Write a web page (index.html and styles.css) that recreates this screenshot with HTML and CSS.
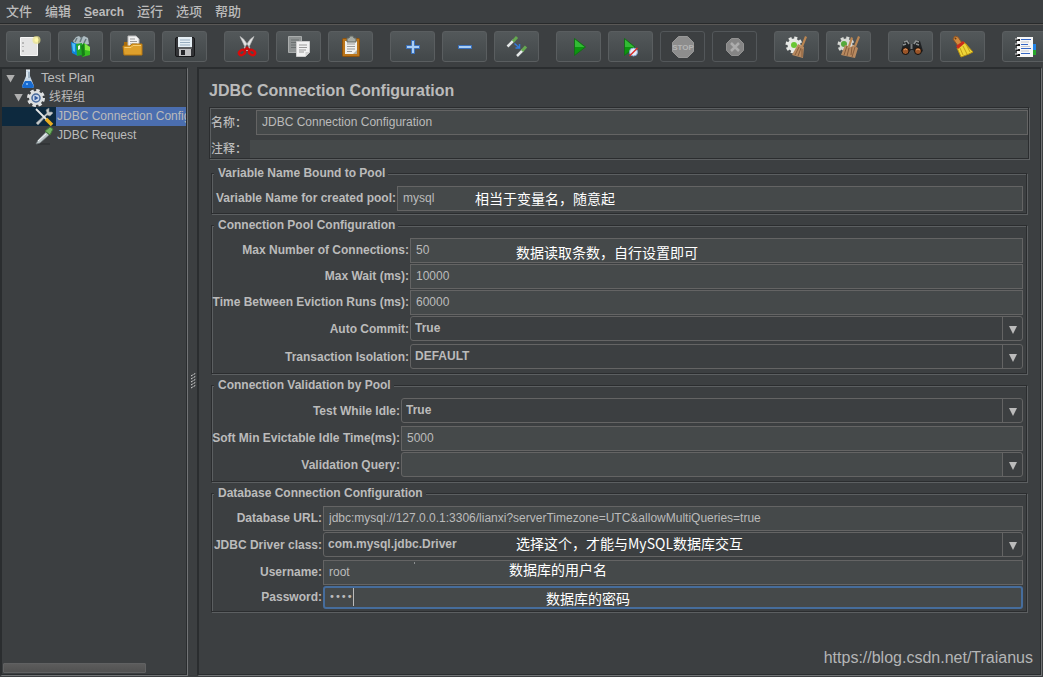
FILE: index.html
```html
<!DOCTYPE html>
<html lang="zh-CN">
<head>
<meta charset="utf-8">
<title>JDBC Connection Configuration</title>
<link rel="stylesheet" href="styles.css">
</head>
<body>
<div class="app">
  <nav class="menubar">
    <button class="menu">文件</button>
    <button class="menu">编辑</button>
    <button class="menu latin"><u>S</u>earch</button>
    <button class="menu">运行</button>
    <button class="menu">选项</button>
    <button class="menu">帮助</button>
  </nav>

  <div class="toolbar">
    <div class="tools">
      <button class="tool" aria-label="New"><svg class="icon" viewBox="0 0 24 24"><path d="M3.500 2.500h17v18h-17z" fill="#e4e4e4" stroke="#f6f6f6"/><path d="M6 7v2M6 11v1M6 15v2" stroke="#888"/><circle cx="19.500" cy="5" r="4" fill="#eee58a" opacity=".7"/><circle cx="19.500" cy="5" r="2" fill="#fff9a8"/></svg></button>
      <button class="tool" aria-label="Templates"><svg class="icon" viewBox="0 0 24 24"><path d="M4 6 7 2l3-1 2 2 3-2 4 2 1 6-12 3z" fill="#aebcc2"/><path d="M6 7 8 3m3 4 2-5m2 6 2-4" stroke="#66777d" stroke-width="1.500"/><path d="m2 7 7 2v12l-6-3z" fill="#0d83dc"/><path d="m3 8 3 1v8l-2-1z" fill="#55bff7"/><path d="m7 9 6-1v12l-5 1z" fill="#20a72c"/><path d="m9 11 2-1v4l-2 1z" fill="#e8f7e8"/><path d="m12 11 3-3 6 4v8l-8 2z" fill="#38bd20"/><path d="m12 11 3-3 1 12-3 2z" fill="#167e17"/><path d="m16 9 5 3v4l-5-1z" fill="#83e944"/></svg></button>
      <button class="tool" aria-label="Open"><svg class="icon" viewBox="0 0 24 24"><path d="M3 7h5l2 2h11v10H3z" fill="#a86c0b"/><path d="M7 1h8l3 3v9H7z" fill="#f2f2f2" stroke="#bbb"/><path d="M9 4h5M9 6.500h7M9 9h7" stroke="#999"/><path d="M2 11h7l2-2h10v11H3z" fill="#dea02c" stroke="#b87910"/><path d="M3.500 12.500H10l2-2h8" stroke="#f7cd72" fill="none"/></svg></button>
      <button class="tool" aria-label="Save"><svg class="icon" viewBox="0 0 24 24"><rect x="2.500" y="2.500" width="19" height="19" rx="1.500" fill="#333437" stroke="#161719"/><path d="M5 2h14v10H5z" fill="#e6eff5"/><path d="M7 5h10M7 7.500h10M7 10h10" stroke="#98adbf"/><path d="M6 14h12v7H6z" fill="#bfc0c1"/><rect x="8" y="15" width="4" height="5" fill="#252629"/><path d="M5 13h14" stroke="#85888b"/></svg></button>
    </div>
    <div class="tools">
      <button class="tool" aria-label="Cut"><svg class="icon" viewBox="0 0 24 24"><path d="M5 1.500 8.500 4l6.500 9-3 3zM19 1.500 15.500 4 9 13l3 3z" fill="#e4e4e4" stroke="#b9baba" stroke-width=".7"/><ellipse cx="7" cy="17.500" rx="3.200" ry="2.300" transform="rotate(-30 7 17.500)" fill="none" stroke="#d70b0b" stroke-width="2.500"/><ellipse cx="17" cy="17.500" rx="3.200" ry="2.300" transform="rotate(30 17 17.500)" fill="none" stroke="#d70b0b" stroke-width="2.500"/><path d="m9 15.500 3-2.500 3 2.500" fill="none" stroke="#c60c0c" stroke-width="2.500"/></svg></button>
      <button class="tool" aria-label="Copy"><svg class="icon" viewBox="0 0 24 24"><path d="M1.500 1.500h13v16h-13z" fill="#8e9292" stroke="#a9acac"/><path d="M4 5h8M4 7.500h8M4 10h8M4 12.500h6" stroke="#6b7070"/><path d="M9.500 6.500h13v11l-4 4h-9z" fill="#f1f1f1" stroke="#ccc"/><path d="M12 10h8M12 12.500h8M12 15h7M12 17h5" stroke="#999"/><path d="m18.500 21 4-4h-4z" fill="#cfcfcf"/></svg></button>
      <button class="tool" aria-label="Paste"><svg class="icon" viewBox="0 0 24 24"><rect x="3.500" y="3.500" width="17" height="18" rx="1" fill="#ba751a" stroke="#8e520d"/><path d="M6 6h12v13H6z" fill="#f0f0ed"/><path d="M8 3h2l1-2h3l1 2h2v4H8z" fill="#a5aaa4" stroke="#606660"/><path d="M8 9h8M8 11.500h8M8 14h8M8 16.500h5" stroke="#999"/><path d="m14 19 4-4v4z" fill="#b2b2aa"/></svg></button>
    </div>
    <div class="tools">
      <button class="tool" aria-label="Expand"><svg class="icon" viewBox="0 0 24 24"><path d="M10.500 5.500h3v5h5v3h-5v5h-3v-5h-5v-3h5z" fill="#a9cef5" stroke="#3970bd"/></svg></button>
      <button class="tool" aria-label="Collapse"><svg class="icon" viewBox="0 0 24 24"><path d="M5.500 10.500h13v3h-13z" fill="#a9cef5" stroke="#3970bd"/></svg></button>
      <button class="tool" aria-label="Toggle"><svg class="icon" viewBox="0 0 24 24"><path d="m2.500 11.500 6-6" stroke="#e5e8e8" stroke-width="2.500"/><path d="m8 6.500 4-4.500" stroke="#65a850" stroke-width="3"/><path d="m12 21 6-6" stroke="#e5e8e8" stroke-width="2.500"/><path d="m17 16 4-4.500" stroke="#65a850" stroke-width="3"/><path d="m9.500 8.500 4.500 4m.5-3.500v4h-4" fill="none" stroke="#347ad9" stroke-width="1.500"/></svg></button>
    </div>
    <div class="tools">
      <button class="tool" aria-label="Start"><svg class="icon" viewBox="0 0 24 24"><path d="M7.500 3.500 18.500 12 7.500 20.500z" fill="#0c960f" stroke="#176c1b"/><path d="M8 4.500 17.500 12H8z" fill="#43ca45" opacity=".7"/></svg></button>
      <button class="tool" aria-label="Start no pauses"><svg class="icon" viewBox="0 0 24 24"><path d="M5.500 3.500 16 12 5.500 20.500z" fill="#0c960f" stroke="#176c1b"/><path d="M6 4.500 15 12H6z" fill="#43ca45" opacity=".7"/><circle cx="14.500" cy="17" r="4" fill="#e7edf7" stroke="#84a3d0"/><path d="m10.500 21 8-8" stroke="#d92925" stroke-width="1.500"/></svg></button>
      <button class="tool" aria-label="Stop" disabled><svg class="icon" viewBox="0 0 24 24"><path d="M7.500 1.500h9l6 6v9l-6 6h-9l-6-6v-9z" fill="#8d8d8d" stroke="#989898"/><text class="stop-word" x="12" y="15" text-anchor="middle">STOP</text></svg></button>
      <button class="tool" aria-label="Shutdown" disabled><svg class="icon" viewBox="0 0 24 24"><path d="M8.500 3.500h7l5 5v7l-5 5h-7l-5-5v-7z" fill="#858585" stroke="#929292"/><path d="m8 8 8 8m0-8-8 8" stroke="#acacac" stroke-width="2.500"/></svg></button>
    </div>
    <div class="tools">
      <button class="tool" aria-label="Clear"><svg class="icon" viewBox="0 0 24 24"><circle cx="9" cy="10" r="7" stroke="#e6e8e5" stroke-width="3" stroke-dasharray="3 2.500"/><circle cx="9" cy="10" r="6.500" fill="#e6e8e5"/><circle cx="9" cy="10" r="3" fill="#69c735"/><path d="m20 1 2 1-4 10-2-1z" fill="#bb8652"/><path d="m13 9 6 3-1 11-11-3z" fill="#b88a60"/><path d="m10 20 4-8m-1 9 3-8m1 9 0-8" stroke="#795034" stroke-width=".8"/></svg></button>
      <button class="tool" aria-label="Clear all"><svg class="icon" viewBox="0 0 24 24"><circle cx="9" cy="10" r="7" stroke="#d7d9d5" stroke-width="3" stroke-dasharray="3 2.500"/><circle cx="9" cy="10" r="6.500" fill="#d7d9d5"/><circle cx="7" cy="9" r="3" fill="#55a93c"/><path d="m14 2 2 1-3 9-2-1zM21 1l2 1-4 10-2-1z" fill="#bb8652"/><path d="m8 10 6 2 2-2 5 3-3 10-14-3z" fill="#b88a60"/><path d="m7 20 3-9m0 10 2-8m3 9 3-10m-4 8 1-8" stroke="#795034" stroke-width=".8"/></svg></button>
    </div>
    <div class="tools">
      <button class="tool" aria-label="Find"><svg class="icon" viewBox="0 0 24 24"><path d="m5 6 4-1 2 4h4l2-4 4 1 3 10-5 4-5-5h-2l-5 5-5-4z" fill="#202224"/><path d="m5 7 3-1 2 3M20 7l-3-1-2 3M4 10l3-1m13 1-3-1" fill="none" stroke="#8d9192" stroke-width="1.500"/><circle cx="6.500" cy="16" r="3.500" fill="#9b5528" stroke="#111"/><circle cx="19" cy="16" r="3.500" fill="#9b5528" stroke="#111"/><path d="M5 15q2-2 3 0m9 0q2-2 4 0" fill="none" stroke="#e29b65"/><path d="M11.500 9h2v5h-2z" fill="#777b7d"/></svg></button>
      <button class="tool" aria-label="Reset search"><svg class="icon" viewBox="0 0 24 24"><path d="m2 4 2-3 3 1 4 6-4 3z" fill="#d08a3e" stroke="#8d5527"/><circle cx="4.500" cy="3.500" r="1" fill="#6a3b14"/><path d="m6 13 7-6 9 10-4 2-8 3z" fill="#edd537" stroke="#b48e12"/><path d="m5 11 7-5 2 2-7 6z" fill="#cb2c1b"/><path d="m9 13 3 7m0-9 4 8m-1-10 4 8" stroke="#c29c17"/></svg></button>
    </div>
    <div class="tools">
      <button class="tool" aria-label="Function helper"><svg class="icon" viewBox="0 0 24 24"><path d="M19 9h4v6h-4z" fill="#2183e6"/><path d="M19 15h4v5h-4z" fill="#27a72b"/><path d="M4 2h16v20H4z" fill="#f7f7f7"/><path d="M8 4.500h10M8 9.500h7M8 13.500h10M8 18.500h9" stroke="#3467c5"/><path d="M8 7h8M8 11.500h9M8 16h8" stroke="#b9bec6" stroke-width=".8"/><path d="M3 5h4M3 10h4M3 15h4M3 20h4" stroke="#151515" stroke-width="2"/><path d="M2 4h3M2 9h3M2 14h3M2 19h3" stroke="#ddd"/></svg></button>
    </div>
  </div>

  <main class="workspace">
    <aside class="tree-panel">
      <ul class="tree">
        <li class="node"><span class="twisty"></span><svg class="node-icon" viewBox="0 0 20 20"><path d="M8 1h4v6l4 10q0 2-2 2H6q-2 0-2-2L8 7z" fill="#c6d6e5"/><path d="M7 12h6l3 5q0 2-2 2H6q-2 0-2-2z" fill="#176bd1"/><path d="M8 1h4M9 3v6" stroke="#eef3f7"/><path d="M11 3v6" stroke="#7990a5"/><circle cx="9" cy="15" r="1" fill="#8cc5ff"/></svg><span class="node-name">Test Plan</span></li>
        <li class="node level-2"><span class="twisty"></span><svg class="node-icon" viewBox="0 0 20 20"><circle cx="10" cy="10" r="7" stroke="#e1e2e3" stroke-width="4" stroke-dasharray="3.200 2.300" fill="none"/><circle cx="10" cy="10" r="7" fill="#dcdedf"/><circle cx="10" cy="10" r="4" fill="#cbd7e9" stroke="#476899" stroke-width="1.500"/><path d="m8.500 7.500 4 2.500-4 2.500z" fill="#305a9f"/></svg><span class="node-name">线程组</span></li>
        <li class="node level-3 selected"><svg class="node-icon" viewBox="0 0 20 20"><path d="m4 18-2-2L13 6l-1-3 3-2v4h3l1 1-3 3-3-1z" fill="#c7cbcc" stroke="#818688" stroke-width=".6"/><path d="m2 2 11 11" stroke="#e7e9e9" stroke-width="1.800"/><path d="m12 12 6 6" stroke="#e9ad20" stroke-width="3.500"/></svg><span class="node-name">JDBC Connection Configuration</span></li>
        <li class="node level-3"><svg class="node-icon" viewBox="0 0 20 20"><path d="M4 18h12" stroke="#282c2e"/><path d="m2 18 2-4 8-8 3 3-9 8z" fill="#bdc7c9" stroke="#70797b" stroke-width=".7"/><path d="m4 15 8-7" stroke="#f3f5f5"/><path d="m11 5 5-4 3 2-3 6z" fill="#75b366" stroke="#3e7836"/></svg><span class="node-name">JDBC Request</span></li>
      </ul>
      <div class="scrollbar"></div>
    </aside>
    <div class="divider"><svg class="grip" viewBox="0 0 5 16"><path d="m0 3 5-3M0 6l5-3M0 9l5-3M0 12l5-3M0 15l5-3" stroke="#d8d8d8" stroke-dasharray="2 1"/></svg></div>

    <form class="config">
      <h1 class="title">JDBC Connection Configuration</h1>
      <div class="naming">
        <div class="naming-row"><label class="naming-label" for="name">名称：</label><input class="text" id="name" value="JDBC Connection Configuration"></div>
        <div class="naming-row comment-row"><label class="naming-label" for="comment">注释：</label><input class="text comment" id="comment"></div>
      </div>

      <fieldset class="group">
        <legend>Variable Name Bound to Pool</legend>
        <div class="fields variable">
          <label for="pool">Variable Name for created pool:</label>
          <div class="field"><input class="text" id="pool" value="mysql"><span class="note note-pool">相当于变量名，随意起</span></div>
        </div>
      </fieldset>

      <fieldset class="group">
        <legend>Connection Pool Configuration</legend>
        <div class="fields pooling">
          <label for="max">Max Number of Connections:</label>
          <div class="field"><input class="text" id="max" value="50"><span class="note note-max">数据读取条数，自行设置即可</span></div>
          <label for="wait">Max Wait (ms):</label>
          <div class="field"><input class="text" id="wait" value="10000"></div>
          <label for="evict">Time Between Eviction Runs (ms):</label>
          <div class="field"><input class="text" id="evict" value="60000"></div>
          <label for="commit">Auto Commit:</label>
          <div class="field combo"><select id="commit"><option>True</option><option>False</option></select></div>
          <label for="isolation">Transaction Isolation:</label>
          <div class="field combo"><select id="isolation"><option>DEFAULT</option></select></div>
        </div>
      </fieldset>

      <fieldset class="group">
        <legend>Connection Validation by Pool</legend>
        <div class="fields validation">
          <label for="idle">Test While Idle:</label>
          <div class="field combo"><select id="idle"><option>True</option><option>False</option></select></div>
          <label for="soft">Soft Min Evictable Idle Time(ms):</label>
          <div class="field"><input class="text" id="soft" value="5000"></div>
          <label for="query">Validation Query:</label>
          <div class="field combo editable"><select id="query"><option></option></select></div>
        </div>
      </fieldset>

      <fieldset class="group">
        <legend>Database Connection Configuration</legend>
        <div class="fields database">
          <label for="url">Database URL:</label>
          <div class="field"><input class="text" id="url" value="jdbc:mysql://127.0.0.1:3306/lianxi?serverTimezone=UTC&amp;allowMultiQueries=true"></div>
          <label for="driver">JDBC Driver class:</label>
          <div class="field combo"><select id="driver"><option>com.mysql.jdbc.Driver</option></select><span class="note note-driver">选择这个，才能与MySQL数据库交互</span></div>
          <label for="user">Username:</label>
          <div class="field"><input class="text" id="user" value="root"><span class="speck"></span><span class="note note-user">数据库的用户名</span></div>
          <label for="password">Password:</label>
          <div class="field"><input class="text password" id="password" type="password" value="root"><span class="caret"></span><span class="note note-password">数据库的密码</span></div>
        </div>
      </fieldset>
      <span class="watermark">https://blog.csdn.net/Traianus</span>
    </form>
  </main>
</div>
</body>
</html>
```
FILE: styles.css
```css
* { box-sizing: border-box; }

body {
  margin: 0;
  background: #3c3f41;
  color: #bbbbbb;
  font: bold 12px/14px "Liberation Sans", "Noto Sans CJK SC", sans-serif;
}

button, input, select { font: inherit; color: inherit; margin: 0; }

.app {
  display: flex;
  flex-direction: column;
  min-height: 100vh;
  padding-bottom: 1px;
  overflow: hidden;
}

.menubar {
  display: flex;
  height: 23px;
  gap: 13px;
  padding: 0 6px;
}

.menu {
  padding: 0;
  border: 0;
  background: none;
  font-size: 13px;
  font-weight: 500;
  line-height: 20px;
}

.latin { font-size: 12px; font-weight: bold; }

.toolbar {
  display: flex;
  gap: 17px;
  height: 44px;
  padding: 6px 6px 0;
  border-top: 1px solid #282a2b;
  box-shadow: inset 0 1px #5a5856;
}

.tools { display: flex; gap: 7px; }

.tool {
  display: flex;
  flex: none;
  align-items: center;
  justify-content: center;
  width: 45px;
  height: 31px;
  margin-top: 1px;
  padding: 0;
  border: 1px solid #5a5e60;
  border-radius: 3px;
  background: linear-gradient(#53585a, #424749);
}

.tool:disabled { background: none; border-color: #53575a; }

.icon { width: 24px; height: 24px; fill: none; }

.stop-word { fill: #b5b5b5; font: bold 8px "Liberation Sans", sans-serif; }

.workspace { display: flex; flex: 1; }

.tree-panel {
  display: flex;
  flex: none;
  flex-direction: column;
  justify-content: space-between;
  width: 188px;
  border: 2px solid #2a2d2f;
  border-right: 1px solid #727476;
  border-bottom: 1px solid #727476;
  box-shadow: inset -1px -1px #2a2d2f;
  padding: 0 1px 2px 0;
}

.tree { margin: 0; padding: 0; list-style: none; font-weight: normal; }

.node {
  display: flex;
  align-items: center;
  height: 19px;
  padding-left: 4px;
  overflow: hidden;
  white-space: nowrap;
}

.level-2 { padding-left: 12px; }
.level-3 { padding-left: 32px; }

.twisty {
  flex: none;
  width: 9px;
  height: 8px;
  margin-right: 3px;
  background: #afafaf;
  clip-path: polygon(0 0, 100% 0, 50% 100%);
}

.node-icon { flex: none; width: 20px; height: 20px; margin-right: 2px; }

.node-name { padding: 0 0 1px 1px; font-size: 12px; line-height: 18px; }
.node:first-child .node-name { font-size: 13px; }

.selected { background: #0d293e; }
.selected .node-name { flex: 1; background: #4b6eaf; }

.scrollbar {
  width: 143px;
  height: 10px;
  margin-left: 1px;
  border: 1px solid #606162;
  border-radius: 1px;
  background: linear-gradient(#5c5c5c, #515151);
}

.divider {
  display: flex;
  flex: none;
  align-items: center;
  justify-content: flex-end;
  width: 9px;
  padding: 18px 1px 0 0;
}

.grip { width: 5px; height: 16px; }

.config {
  position: relative;
  flex: 1;
  min-width: 0;
  margin-right: 1px;
  padding: 12px 11px 0 10px;
  border: 2px solid #2a2d2f;
  border-right: 1px solid #727476;
  border-bottom: 1px solid #727476;
  box-shadow: inset -1px -1px #2a2d2f;
}

.title { margin: 0 0 6px; font-size: 16px; line-height: 20px; }

/* Etched frame: a dark line with a light line below and to the right of it. */
.naming, .group {
  border: 1px solid #2b2d2f;
  box-shadow: inset 1px 1px #5c5f61, 1px 1px #5c5f61;
}

.naming { margin-right: 1px; padding: 2px 0 0 1px; }

.naming-row { display: flex; align-items: center; gap: 6px; }

.comment-row { gap: 0; padding-top: 5px; }

.naming-label { flex: none; width: 39px; font-weight: 500; }

.text {
  display: block;
  width: 100%;
  height: 25px;
  padding: 0 5px 2px;
  border: 1px solid #646464;
  border-radius: 0;
  outline: 0;
  background: #45494a;
  font-weight: normal;
}

.comment { height: 18px; border: 0; }

.group { min-width: 0; margin: 5px 3px 0 2px; padding: 6px 3px 1px; }

.naming + .group { margin-top: 8px; }

.group legend {
  height: 13px;
  margin-left: -1px;
  padding: 0 3px 0 4px;
  background: #3c3f41;
  line-height: 13px;
}

.fields {
  display: grid;
  column-gap: 1px;
  align-items: center;
  white-space: nowrap;
}

.fields label { justify-self: end; padding-bottom: 2px; }

.variable { grid-template-columns: 181px 1fr; }
.pooling { grid-template-columns: 194px 1fr; }
.validation { grid-template-columns: 185px 1fr; }
.database { grid-template-columns: 107px 1fr; }

.field { position: relative; padding-bottom: 1px; }

.combo { padding-bottom: 3px; }

.combo select {
  display: block;
  width: 100%;
  height: 25px;
  padding: 0 24px 2px 4px;
  border: 1px solid #646464;
  border-radius: 3px;
  outline: 0;
  appearance: none;
  background: linear-gradient(#646464, #646464) right 19px top 0 / 1px 100% no-repeat #3c3f41;
}

.combo::after {
  content: "";
  position: absolute;
  top: 10px;
  right: 6px;
  width: 8px;
  height: 8px;
  background: #bbbbbb;
  clip-path: polygon(0 0, 100% 0, 50% 100%);
  pointer-events: none;
}

.combo.editable select { background: linear-gradient(90deg, #646464 1px, #3c3f41 1px) right / 20px 100% no-repeat #45494a; }

.password {
  height: 23px;
  padding-left: 4px;
  border: 2px solid #466d9c;
  border-radius: 3px;
  font: 10px "DejaVu Sans", sans-serif;
}

.caret {
  position: absolute;
  top: 2px;
  left: 30px;
  width: 1px;
  height: 18px;
  background: #bbbbbb;
}

.speck {
  position: absolute;
  top: 2px;
  left: 91px;
  width: 1px;
  height: 2px;
  background: #8c8f90;
}

.note {
  position: absolute;
  top: 2px;
  color: #ffffff;
  font: 14px/20px "Noto Sans CJK SC", sans-serif;
  pointer-events: none;
}

.note-pool { left: 78px; }
.note-max { left: 106px; top: 4px; }
.note-driver { left: 193px; top: 1px; }
.note-user { left: 186px; top: -1px; }
.note-password { left: 223px; }

.watermark {
  position: absolute;
  right: 8px;
  bottom: 7px;
  color: #b4b5b6;
  font: 16px/20px "Liberation Sans", sans-serif;
}
```
